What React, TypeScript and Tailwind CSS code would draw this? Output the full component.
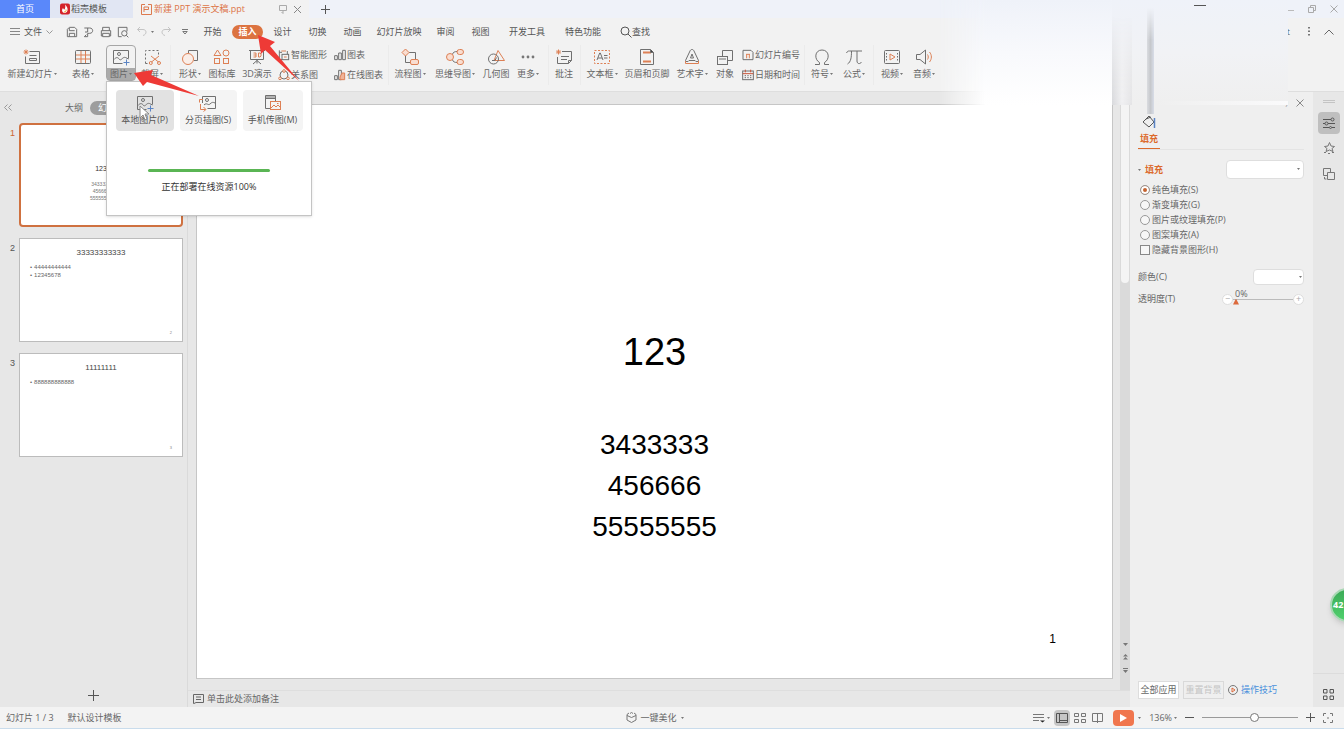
import type { ReactNode } from "react";
import { useState } from "react";

const DARK = "#707070";
const ORANGE = "#dd8055";

function Icon({
  children,
  size = 18,
}: {
  children: ReactNode;
  size?: number;
}): React.ReactElement {
  return (
    <svg
      width={size}
      height={size}
      viewBox="0 0 18 18"
      fill="none"
      stroke={DARK}
      strokeWidth="1"
      className="shrink-0"
      aria-hidden="true"
    >
      {children}
    </svg>
  );
}

function Caret(): React.ReactElement {
  return (
    <svg width="3" height="2" viewBox="0 0 3 2" className="shrink-0" aria-hidden="true">
      <path d="M0 0h3L1.500 2z" fill="#777" />
    </svg>
  );
}

const icons = {
  newSlide: (
    <Icon>
      <path d="M6.500 3.500h10v12h-14v-7M6.500 7.500h7M6.500 10.500h7v2h-7z" />
      <path d="M0.500 4h5M3 1.500v5M1.300 2.300l3.400 3.400M4.700 2.300l-3.400 3.400" stroke={ORANGE} />
    </Icon>
  ),
  table: (
    <Icon>
      <path d="M2 7h14M2 11h14M7 3v12M11.500 3v12" stroke={ORANGE} />
      <rect x="1.500" y="2.500" width="15" height="13" rx="1" />
    </Icon>
  ),
  picture: (
    <Icon>
      <path d="M10.500 15.500h-9v-13h15v8" />
      <circle cx="7" cy="6" r="1.500" />
      <path d="M2 11.500c2-2.500 4-2.500 5.500 0 2 1.500 3-3 6-2l3 1.500" />
      <path d="M14.500 11.500v6M11.500 14.500h6" stroke="#5b84c4" />
    </Icon>
  ),
  screenshot: (
    <Icon>
      <path d="M2.500 15.500v-13h13v4M2.500 15.500h4" strokeDasharray="2 2" />
      <path d="M8 8l7.500 6M16 8l-7.500 6" stroke={ORANGE} />
      <circle cx="7.800" cy="15" r="1.500" stroke={ORANGE} />
      <circle cx="16" cy="15" r="1.500" stroke={ORANGE} />
    </Icon>
  ),
  shapes: (
    <Icon>
      <path d="M7.500 5V2.500h9v10H13" />
      <circle cx="7" cy="11" r="5.500" stroke={ORANGE} fill="#faeee8" />
    </Icon>
  ),
  iconLibrary: (
    <Icon>
      <g stroke={ORANGE}>
        <path d="M4.500 2L8 7.500H1z" />
        <circle cx="13" cy="5" r="3" />
        <rect x="1.500" y="10.500" width="5" height="5" />
        <rect x="10.500" y="10.500" width="5" height="5" />
      </g>
    </Icon>
  ),
  threeD: (
    <Icon>
      <path d="M1 2.500h16M2.500 2.500v9h13v-9M9 11.500v4M5 16l4-3.500 4 3.500" />
      <path d="M5.500 5h2.500v4H5.500M5.500 7H8M10.500 5h1.500l1 1v2l-1 1h-1.500z" stroke={ORANGE} />
    </Icon>
  ),
  flow: (
    <Icon>
      <path d="M8 4.500h6.500V11M4.500 8v6.500H10" />
      <g stroke={ORANGE} fill="#f9ddd0">
        <path d="M4.500 1L8 4.500 4.500 8 1 4.500z" />
        <rect x="9.500" y="11.500" width="8" height="5" rx="1.500" />
      </g>
    </Icon>
  ),
  mindMap: (
    <Icon>
      <path d="M6 7c1-3 3-3.500 5-3.500M6 11c1 3 3 3.500 5 3.500" />
      <g stroke={ORANGE} fill="#f9ddd0">
        <circle cx="4" cy="9" r="3.500" />
        <rect x="11" y="1.500" width="6.500" height="5" rx="2.500" />
        <rect x="11" y="11.500" width="6.500" height="5" rx="2.500" />
      </g>
    </Icon>
  ),
  geometry: (
    <Icon>
      <path d="M11 2.500l6.500 10H7z" stroke={ORANGE} />
      <circle cx="6.500" cy="11" r="5" />
      <path d="M5 12.500h3l1.500-3" />
    </Icon>
  ),
  more: (
    <Icon>
      <g fill="#777" stroke="none">
        <circle cx="4" cy="9" r="1.400" />
        <circle cx="9" cy="9" r="1.400" />
        <circle cx="14" cy="9" r="1.400" />
      </g>
    </Icon>
  ),
  comment: (
    <Icon>
      <path d="M7 3.500h9.500v9l-3 3h-11V9M6 8.500h8M6 11.500h6M13.500 15.500v-3h3" />
      <path d="M1 4h5M3.500 1.500v5M1.800 2.300l3.400 3.400M5.200 2.300L1.800 5.700" stroke={ORANGE} />
    </Icon>
  ),
  textBox: (
    <Icon>
      <rect x="1.500" y="2.500" width="15" height="13" stroke={ORANGE} strokeDasharray="2 1.500" />
      <path d="M4 12l2.700-7h.6L10 12M5 10h4M11 7.500h3.500M11 10h3.500" />
    </Icon>
  ),
  headerFooter: (
    <Icon>
      <path d="M2.500 1.500h10l3 3v12h-13z" />
      <path d="M5 4.500h8M5 13.500h8" stroke={ORANGE} strokeWidth="2" />
      <path d="M12.500 1.500v3h3" fill="#444" />
    </Icon>
  ),
  wordArt: (
    <Icon>
      <path d="M9 1.500c1 0 1.500.5 2 1.500l4.500 9.500c0 1.500-3 1.500-3.500 0H6c-.5 1.500-3.500 1.500-3.500 0L7 3c.5-1 1-1.500 2-1.500z" />
      <path d="M9 6l-1.500 4h3z" />
      <path d="M2.500 13v2.500h13V13" stroke={ORANGE} />
    </Icon>
  ),
  object: (
    <Icon>
      <path d="M6.500 8V2.500h10v10H12" />
      <rect x="1.500" y="8.500" width="10" height="8" />
      <path d="M3 11h7" />
    </Icon>
  ),
  omega: (
    <Icon>
      <path d="M2 16.500h4.500v-2C1 11.500 1.500 2 9 2s8 9.500 2.500 12.500v2H16" />
    </Icon>
  ),
  pi: (
    <Icon>
      <path d="M1.500 5c1-2 1.500-2 3-2H17M6.500 3c0 6-.5 11-4 13M12 3v10c0 3 3 3.500 4.500 1" />
    </Icon>
  ),
  video: (
    <Icon>
      <rect x="1.500" y="2.500" width="15" height="13" rx="1" />
      <path d="M3.500 5v9M14.500 5v9" strokeDasharray="1.500 1.500" />
      <path d="M7 6l5 3-5 3z" stroke={ORANGE} />
    </Icon>
  ),
  audio: (
    <Icon>
      <path d="M1.500 6.500H5L10.500 2v14L5 11.500H1.500z" />
      <path d="M12.500 6.500c1 1.500 1 3.500 0 5M14.500 4c2.500 3 2.500 7 0 10" stroke={ORANGE} />
    </Icon>
  ),
  smartArt: (
    <Icon size={12}>
      <path d="M2 2v14h4M2 5h4M14 8V3" strokeWidth="1.500" />
      <rect x="6" y="8" width="10" height="8" strokeWidth="1.500" />
      <path d="M5 3h7M9 12h4" stroke={ORANGE} strokeWidth="1.500" />
    </Icon>
  ),
  relation: (
    <Icon size={12}>
      <circle cx="9" cy="9" r="6" strokeWidth="1.500" />
      <g stroke={ORANGE} fill="#f2f2f2" strokeWidth="1.500">
        <circle cx="9" cy="3" r="2" />
        <circle cx="3" cy="14" r="2" />
        <circle cx="15" cy="14" r="2" />
      </g>
    </Icon>
  ),
  chart: (
    <Icon size={12}>
      <path d="M1 10h4v6H1zM7 6h4v10H7zM13 2h4v14h-4z" strokeWidth="1.500" />
    </Icon>
  ),
  onlineChart: (
    <Icon size={12}>
      <path d="M1 10h4v6H1zM7 2h4v14H7z" strokeWidth="1.500" />
      <path d="M12 6h4v10H9v-4z" stroke={ORANGE} fill="#f0b498" strokeWidth="1.500" />
    </Icon>
  ),
  slideNumber: (
    <Icon size={12}>
      <path d="M1.500 2h12l3 3v11h-15z" strokeWidth="1.500" />
      <path d="M7 8v6M11 8v6M6 8h6" stroke={ORANGE} strokeWidth="1.500" />
    </Icon>
  ),
  calendar: (
    <Icon size={12}>
      <rect x="1" y="3" width="16" height="13" strokeWidth="1.500" />
      <path d="M1 7h16M5 1v4M13 1v4" stroke="#c8553a" strokeWidth="1.500" />
      <path d="M4 10h2M8 10h2M12 10h2M4 13h2M8 13h2M12 13h2" strokeWidth="1.500" />
    </Icon>
  ),
};

function RibbonButton({
  icon,
  label,
  width,
  caret = false,
}: {
  icon: ReactNode;
  label: string;
  width: string;
  caret?: boolean;
}): React.ReactElement {
  return (
    <button type="button" className={`flex shrink-0 flex-col items-center gap-0.5 pt-[3px] ${width}`}>
      {icon}
      <span className="flex h-3 items-center gap-px whitespace-nowrap leading-3">
        {label}
        {caret && <Caret />}
      </span>
    </button>
  );
}

function RibbonStack({
  items,
  width,
}: {
  items: { icon: ReactNode; label: string }[];
  width: string;
}): React.ReactElement {
  return (
    <div className={`flex shrink-0 flex-col gap-2 pl-0.5 pt-1 ${width}`}>
      {items.map((item) => (
        <button key={item.label} type="button" className="flex h-3 items-center gap-px whitespace-nowrap leading-3">
          {item.icon}
          {item.label}
        </button>
      ))}
    </div>
  );
}

function Divider({ width }: { width: string }): React.ReactElement {
  return (
    <div className={`flex shrink-0 justify-center ${width}`}>
      <div className="h-10 w-px bg-[#ebebeb]" />
    </div>
  );
}

function TabBar(): React.ReactElement {
  return (
    <header className="flex h-[18px] shrink-0 items-stretch bg-[#eff2f9]">
      <button type="button" className="w-[50px] bg-[#5a88fa] text-white">
        首页
      </button>
      <button type="button" className="flex w-[83px] items-center gap-px bg-[#e1e6f3] pl-2.5 text-[#555]">
        <svg width="10" height="12" viewBox="0 0 10 12" aria-hidden="true">
          <rect y="0.500" width="10" height="11" rx="2" fill="#d4232a" />
          <path d="M5 1.500c2 2 3 4 2.500 6C7 9.500 5 10.500 3 9.500 1.500 8 2 6 3 5c.5 1 1 1.500 1.500 1.500C5.500 5 5.500 3 5 1.500z" fill="#fff" />
          <path d="M6 6.500c.5 1.500-.5 2.500-2 2.500" stroke="#f4a62a" fill="none" />
        </svg>
        稻壳模板
      </button>
      <div className="flex w-[176px] items-center bg-[#f2f2f2] pl-2 pr-[7px]">
        <svg width="11" height="11" viewBox="0 0 11 11" fill="none" stroke="#dd7a4e" aria-hidden="true">
          <path d="M4 .500H.500v10h10V.500H7M3 8V3h4.500v2.500H3" />
        </svg>
        <span className="ml-0.5 whitespace-nowrap text-[#dd7548]">新建 PPT 演示文稿.ppt</span>
        <svg className="ml-auto" width="8" height="9" viewBox="0 0 8 9" fill="none" stroke="#aaa" aria-hidden="true">
          <path d="M.500.500h7v5h-7zM4 5.500v3L2.500 7" />
        </svg>
        <button type="button" aria-label="关闭标签" className="ml-1.5">
          <svg width="9" height="9" viewBox="0 0 9 9" stroke="#888" aria-hidden="true">
            <path d="M1 1l7 7M8 1L1 8" />
          </svg>
        </button>
      </div>
      <button type="button" aria-label="新建标签" className="flex w-8 items-center justify-center">
        <svg width="9" height="9" viewBox="0 0 9 9" stroke="#555" aria-hidden="true">
          <path d="M4.500 0v9M0 4.500h9" />
        </svg>
      </button>
      <div className="ml-auto flex items-center gap-3.5 pr-1.5">
        <button type="button" aria-label="最小化">
          <svg width="8" height="8" viewBox="0 0 8 8" stroke="#bbb" aria-hidden="true">
            <path d="M0 5.500h8" />
          </svg>
        </button>
        <button type="button" aria-label="还原">
          <svg width="8" height="8" viewBox="0 0 8 8" fill="none" stroke="#aaa" aria-hidden="true">
            <path d="M.500 2.500h5v5h-5zM2.500 2.500v-2h5v5h-2" />
          </svg>
        </button>
        <button type="button" aria-label="关闭">
          <svg width="8" height="8" viewBox="0 0 8 8" stroke="#aaa" aria-hidden="true">
            <path d="M.500.500l7 7M7.500.500l-7 7" />
          </svg>
        </button>
      </div>
    </header>
  );
}

const quickActions = [
  { name: "保存", path: "M2 16V5l3-3h8l3 3v11zM5 3v4h8M5 16v-5h8v5" },
  { name: "输出", path: "M2 3h8c6 0 6 8 0 8H7M7 3v6H3M7 11v5H2M5 13l-3 3" },
  { name: "打印", path: "M4 7V2h10v5M4 15H2V7h14v8h-2M4 11h10v5H4z" },
  { name: "打印预览", path: "M7 16H2V2h13v6M14 14l3 3M15 11a4 4 0 11-8 0 4 4 0 018 0" },
];

const menuTabs = [
  { label: "开始", width: "w-[35px]" },
  { label: "插入", width: "w-[35px]" },
  { label: "设计", width: "w-[35px]" },
  { label: "切换", width: "w-[35px]" },
  { label: "动画", width: "w-[35px]" },
  { label: "幻灯片放映", width: "w-[58px]" },
  { label: "审阅", width: "w-[35px]" },
  { label: "视图", width: "w-[35px]" },
  { label: "开发工具", width: "w-[58px]" },
  { label: "特色功能", width: "w-[54px]" },
];

function MenuBar(): React.ReactElement {
  const [active, setActive] = useState("插入");

  return (
    <nav className="flex h-[27px] shrink-0 items-center text-[#555]">
      <button type="button" className="flex w-[63px] items-center gap-1 pl-2.5">
        <svg width="10" height="8" viewBox="0 0 10 8" stroke="#888" aria-hidden="true">
          <path d="M0 .500h10M0 3.500h10M0 6.500h10" />
        </svg>
        文件
        <svg width="7" height="4" viewBox="0 0 7 4" fill="none" stroke="#999" aria-hidden="true">
          <path d="M.500.500l3 3 3-3" />
        </svg>
      </button>
      {quickActions.map((action) => (
        <button key={action.name} type="button" aria-label={action.name} className="flex w-[17px] justify-center">
          <svg width="12" height="12" viewBox="0 0 18 18" fill="none" stroke="#707070" strokeWidth="1.500" aria-hidden="true">
            <path d={action.path} />
          </svg>
        </button>
      ))}
      <button type="button" aria-label="撤销" className="flex w-[26px] items-center gap-1 pl-1.5">
        <svg width="10" height="9" viewBox="0 0 10 9" fill="none" stroke="#c4c4c4" aria-hidden="true">
          <path d="M3 0L.500 2.500 3 5M.500 2.500H6c4 0 4 5 0 6" />
        </svg>
        <Caret />
      </button>
      <button type="button" aria-label="恢复" className="flex w-[18px] justify-center">
        <svg width="10" height="9" viewBox="0 0 10 9" fill="none" stroke="#c4c4c4" aria-hidden="true">
          <path d="M7 0l2.500 2.500L7 5M9.500 2.500H4c-4 0-4 5 0 6" />
        </svg>
      </button>
      <button type="button" aria-label="自定义工具栏" className="flex w-5 justify-center">
        <svg width="6" height="6" viewBox="0 0 6 6" fill="none" stroke="#777" aria-hidden="true">
          <path d="M0 .500h6M.800 2.500h4.400L3 5z" />
        </svg>
      </button>
      {menuTabs.map((tab) => (
        <button
          key={tab.label}
          type="button"
          onClick={() => setActive(tab.label)}
          className={`flex justify-center whitespace-nowrap ${tab.width}`}
        >
          <span
            className={
              tab.label === active
                ? "rounded-full bg-[#dc7340] px-1.5 font-bold leading-[14px] text-white"
                : "leading-[14px]"
            }
          >
            {tab.label}
          </span>
        </button>
      ))}
      <button type="button" className="ml-2.5 flex items-center whitespace-nowrap">
        <svg width="12" height="12" viewBox="0 0 12 12" fill="none" stroke="#555" aria-hidden="true">
          <circle cx="5" cy="5" r="4" />
          <path d="M8 8l3.500 3.500" />
        </svg>
        查找
      </button>
      <div className="ml-auto flex items-center gap-3.5 pr-2.5">
        <span className="pr-1">t</span>
        <button type="button" aria-label="更多选项">
          <svg width="2" height="9" viewBox="0 0 2 9" fill="#777" aria-hidden="true">
            <path d="M0 0h2v1.500H0zM0 3.500h2V5H0zM0 7h2v1.500H0z" />
          </svg>
        </button>
        <button type="button" aria-label="收起功能区">
          <svg width="10" height="6" viewBox="0 0 10 6" fill="none" stroke="#666" aria-hidden="true">
            <path d="M.500 5.500L5 1l4.500 4.500" />
          </svg>
        </button>
      </div>
    </nav>
  );
}

function PictureMenu(): React.ReactElement {
  return (
    <div className="absolute left-0 top-full z-20 flex h-[135px] w-[206px] cursor-default flex-col items-center border border-[#c4c4c4] bg-white pt-2 text-[#555] shadow-sm">
      <div className="flex gap-1.5">
        <button type="button" className="flex h-[41px] w-[58px] flex-col items-center gap-0.5 rounded-sm bg-[#e2e2e2] pt-1">
          {icons.picture}
          <span className="whitespace-nowrap leading-3">本地图片(P)</span>
        </button>
        <button type="button" className="flex h-[41px] w-[57px] flex-col items-center gap-0.5 rounded-sm bg-[#f4f4f4] pt-1">
          <Icon>
            <path d="M3.500 9V2.500h13v12h-8" />
            <circle cx="8" cy="6" r="1.500" />
            <path d="M5 11c3-3 4 1 6-1s3-2 5-1" />
            <path d="M4 5.500H.500v3M1.500 10v5.500h5M4.500 13l2.500 2.500-2.500 2" stroke={ORANGE} />
          </Icon>
          <span className="whitespace-nowrap leading-3">分页插图(S)</span>
        </button>
        <button type="button" className="flex h-[41px] w-[60px] flex-col items-center gap-0.5 rounded-sm bg-[#f4f4f4] pt-1">
          <Icon>
            <path d="M6 14.500H1.500v-13h10V7M1.500 4.500h10M1.500 3h10" />
            <rect x="6.500" y="7.500" width="10" height="8" stroke={ORANGE} />
            <path d="M7 14l3-3 2 2 2-2 2 2M13 9.500h1.500" stroke={ORANGE} />
          </Icon>
          <span className="whitespace-nowrap leading-3">手机传图(M)</span>
        </button>
      </div>
      <div
        role="progressbar"
        aria-label="部署进度"
        aria-valuenow={100}
        className="mt-[38px] h-[3px] w-[122px] rounded-full bg-[#5ab554]"
      />
      <p className="mt-[7px] leading-4 text-[#333]">正在部署在线资源100%</p>
    </div>
  );
}

function Ribbon(): React.ReactElement {
  return (
    <section className="flex h-[47px] shrink-0 items-start border-b border-[#dedede] text-[#666]">
      <RibbonButton icon={icons.newSlide} label="新建幻灯片" width="w-16" caret />
      <RibbonButton icon={icons.table} label="表格" width="w-[38px]" caret />
      <div className="relative ml-1 mr-0.5 h-[36px] shrink-0">
        <button
          type="button"
          aria-expanded="true"
          className="flex h-[36px] w-[30px] flex-col items-center gap-0.5 rounded-sm border border-[#a6a6a6] bg-[#f2f2f2] pt-0.5"
        >
          {icons.picture}
          <span className="flex w-full flex-1 items-center justify-center gap-px bg-[#ababab] leading-3">
            图片
            <Caret />
          </span>
        </button>
        <PictureMenu />
      </div>
      <RibbonButton icon={icons.screenshot} label="截屏" width="w-7" caret />
      <Divider width="w-2" />
      <RibbonButton icon={icons.shapes} label="形状" width="w-8" caret />
      <RibbonButton icon={icons.iconLibrary} label="图标库" width="w-8" />
      <RibbonButton icon={icons.threeD} label="3D演示" width="w-[38px]" />
      <RibbonStack
        width="w-14"
        items={[
          { icon: icons.smartArt, label: "智能图形" },
          { icon: icons.relation, label: "关系图" },
        ]}
      />
      <RibbonStack
        width="w-[54px]"
        items={[
          { icon: icons.chart, label: "图表" },
          { icon: icons.onlineChart, label: "在线图表" },
        ]}
      />
      <Divider width="w-1" />
      <RibbonButton icon={icons.flow} label="流程图" width="w-10" caret />
      <RibbonButton icon={icons.mindMap} label="思维导图" width="w-[50px]" caret />
      <RibbonButton icon={icons.geometry} label="几何图" width="w-8" />
      <RibbonButton icon={icons.more} label="更多" width="w-8" caret />
      <Divider width="w-2" />
      <RibbonButton icon={icons.comment} label="批注" width="w-6" />
      <Divider width="w-2" />
      <RibbonButton icon={icons.textBox} label="文本框" width="w-9" caret />
      <RibbonButton icon={icons.headerFooter} label="页眉和页脚" width="w-[54px]" />
      <RibbonButton icon={icons.wordArt} label="艺术字" width="w-9" caret />
      <RibbonButton icon={icons.object} label="对象" width="w-[30px]" />
      <RibbonStack
        width="w-[62px]"
        items={[
          { icon: icons.slideNumber, label: "幻灯片编号" },
          { icon: icons.calendar, label: "日期和时间" },
        ]}
      />
      <Divider width="w-1" />
      <RibbonButton icon={icons.omega} label="符号" width="w-8" caret />
      <RibbonButton icon={icons.pi} label="公式" width="w-8" caret />
      <Divider width="w-1.5" />
      <RibbonButton icon={icons.video} label="视频" width="w-8" caret />
      <RibbonButton icon={icons.audio} label="音频" width="w-8" caret />
    </section>
  );
}

const thumbnails = [
  { title: "33333333333", bullets: ["44444444444", "12345678"] },
  { title: "11111111", bullets: ["888888888888"] },
];

function SlidePanel(): React.ReactElement {
  return (
    <aside className="flex w-[188px] shrink-0 flex-col border-r border-[#dadada] bg-[#e7e7e7]">
      <div className="flex h-[31px] items-center pl-1 text-[#666]">
        <button type="button" aria-label="收起面板" className="w-[61px] text-left">
          <svg width="8" height="7" viewBox="0 0 8 7" fill="none" stroke="#999" aria-hidden="true">
            <path d="M3.500.500l-3 3 3 3M7.500.500l-3 3 3 3" />
          </svg>
        </button>
        <button type="button">大纲</button>
        <button type="button" className="ml-[7px] rounded-full bg-[#9d9d9d] px-2 leading-[14px] text-white">
          幻灯片
        </button>
      </div>
      <ol className="flex flex-col gap-[11px] font-['Liberation_Sans',sans-serif]">
        <li className="flex pr-1">
          <span className="w-[19px] pr-1 pt-1 text-right text-[#cc6633]">1</span>
          <div className="flex h-[104px] flex-1 flex-col items-center rounded-sm border-2 border-[#cf7140] bg-white pt-[38px]">
            <p className="text-[7px] leading-3 text-[#333]">123</p>
            <p className="mt-1.5 whitespace-pre-line text-center text-[5px] leading-[7px] text-[#777]">
              {"3433333\n456666\n55555555"}
            </p>
          </div>
        </li>
        {thumbnails.map((slide, index) => (
          <li key={slide.title} className="flex pr-1">
            <span className="w-[19px] pr-1 pt-1 text-right text-[#555]">{index + 2}</span>
            <div className="flex h-[104px] flex-1 flex-col border border-[#bcbcbc] bg-white px-2.5 pt-2">
              <p className="text-center text-[8px] leading-3 text-[#444]">{slide.title}</p>
              <ul className="mt-1 text-[6px] leading-[8px] text-[#666]">
                {slide.bullets.map((bullet) => (
                  <li key={bullet} className="flex gap-0.5">
                    <span>•</span>
                    {bullet}
                  </li>
                ))}
              </ul>
              <span className="mb-1.5 mt-auto self-end text-[4px] leading-[4px] text-[#888]">{index + 2}</span>
            </div>
          </li>
        ))}
      </ol>
      <button type="button" aria-label="新建幻灯片" className="mb-1.5 mt-auto self-center">
        <svg width="11" height="11" viewBox="0 0 11 11" stroke="#555" aria-hidden="true">
          <path d="M5.500 0v11M0 5.500h11" />
        </svg>
      </button>
    </aside>
  );
}

function SlideEditor(): React.ReactElement {
  return (
    <main className="flex min-w-0 flex-1 flex-col bg-[#e7e7e7]">
      <div className="flex flex-1">
        <div className="flex min-w-0 flex-1 pb-[11px] pl-2 pr-[7px] pt-3">
          <article className="flex flex-1 flex-col border border-[#c6c6c6] bg-white pt-[223px] text-center font-['Liberation_Sans',Arial,sans-serif] text-black">
            <h1 className="text-[38px] leading-[48px]">123</h1>
            <p className="mt-12 whitespace-pre-line text-[28px] leading-[41px]">{"3433333\n456666\n55555555"}</p>
            <span className="mb-[31px] mr-14 mt-auto self-end text-[12px] leading-4">1</span>
          </article>
        </div>
        <div className="flex w-[10px] flex-col items-center bg-[#dadada]">
          <div className="h-[191px] w-2 rounded-b bg-[#f4f4f4]" />
          <div className="mb-4 mt-auto flex flex-col items-center gap-2">
            <svg width="5" height="3" viewBox="0 0 5 3" fill="#777" aria-hidden="true">
              <path d="M0 0h5L2.500 3z" />
            </svg>
            <svg width="5" height="6" viewBox="0 0 5 6" fill="#777" aria-hidden="true">
              <path d="M2.500 0L5 2.500H0zM2.500 3L5 5.500H0z" />
            </svg>
            <svg width="5" height="6" viewBox="0 0 5 6" fill="#777" aria-hidden="true">
              <path d="M0 0h5v1H0zM0 2h5L2.500 5z" />
            </svg>
          </div>
        </div>
      </div>
      <div className="flex h-[17px] items-center gap-[3px] border-t border-[#dedede] pl-[5px] text-[#666]">
        <svg width="11" height="10" viewBox="0 0 11 10" fill="none" stroke="#666" aria-hidden="true">
          <path d="M.500.500h10v8H3l-2 1H.500zM3 3h5M3 5.500h5" />
        </svg>
        单击此处添加备注
      </div>
    </main>
  );
}

const fillOptions = ["纯色填充(S)", "渐变填充(G)", "图片或纹理填充(P)", "图案填充(A)"];

function FillPanel(): React.ReactElement {
  const [fill, setFill] = useState(fillOptions[0]);
  const [opacity, setOpacity] = useState(0);

  return (
    <aside className="flex w-[183px] shrink-0 flex-col bg-[#efefef] pl-2 pr-[9px] text-[#666]">
      <div className="flex h-[22px] items-center justify-end gap-2">
        <span className="text-[#999]">)</span>
        <button type="button" aria-label="关闭面板">
          <svg width="8" height="8" viewBox="0 0 8 8" stroke="#888" aria-hidden="true">
            <path d="M.500.500l7 7M7.500.500l-7 7" />
          </svg>
        </button>
      </div>
      <div className="border-b border-[#e4e4e4]">
        <button type="button" className="flex w-[22px] flex-col items-center border-b border-[#dc6a2c] font-bold text-[#dc6a2c]">
          <svg width="14" height="16" viewBox="0 0 14 16" fill="none" aria-hidden="true">
            <path d="M7 2l5 6-5 5-6-5zM4 5l5-2" stroke="#555" />
            <path d="M12.500 4v10" stroke="#5b84c4" strokeWidth="1.500" />
          </svg>
          <span className="whitespace-nowrap leading-[18px]">填充</span>
        </button>
      </div>
      <div className="mt-2.5 flex items-center justify-between">
        <label htmlFor="fill-preset" className="flex items-center gap-1 font-bold text-[#dc6a2c]">
          <Caret />
          填充
        </label>
        <span className="relative flex">
          <select id="fill-preset" className="h-[19px] w-[78px] appearance-none rounded-sm border border-[#dedede] bg-white">
            <option value=""></option>
          </select>
          <span className="pointer-events-none absolute right-1 top-2">
            <Caret />
          </span>
        </span>
      </div>
      <fieldset className="mt-[3px]">
        {fillOptions.map((option) => (
          <label key={option} className="flex h-[15px] items-center gap-0.5 whitespace-nowrap pl-0.5">
            <input
              type="radio"
              name="fill"
              checked={fill === option}
              onChange={() => setFill(option)}
              className="size-[10px] shrink-0 appearance-none rounded-full border border-[#999] bg-[#f7f7f7] checked:bg-[#c5622f] checked:shadow-[inset_0_0_0_2px_#fff]"
            />
            {option}
          </label>
        ))}
        <label className="flex h-[15px] items-center gap-0.5 whitespace-nowrap pl-0.5">
          <input type="checkbox" className="size-[10px] shrink-0 appearance-none border border-[#888] bg-[#f7f7f7] checked:bg-[#c5622f]" />
          隐藏背景图形(H)
        </label>
      </fieldset>
      <div className="mt-3 flex items-center justify-between">
        <label htmlFor="fill-color">颜色(C)</label>
        <span className="relative flex">
          <select id="fill-color" className="h-4 w-[51px] appearance-none rounded-sm border border-[#dedede] bg-white">
            <option value=""></option>
          </select>
          <span className="pointer-events-none absolute right-0.5 top-[7px]">
            <Caret />
          </span>
        </span>
      </div>
      <div className="mt-2 flex items-center">
        <label htmlFor="opacity">透明度(T)</label>
        <button type="button" aria-label="减少" className="ml-auto flex size-[11px] items-center justify-center rounded-full border border-[#ddd] bg-white text-[#aaa]">
          −
        </button>
        <span className="relative flex h-3 w-[60px] items-center">
          <span className="absolute -top-[5px] left-0.5">{opacity}%</span>
          <input
            id="opacity"
            type="range"
            min={0}
            max={100}
            value={opacity}
            onChange={(e) => setOpacity(Number(e.target.value))}
            className="h-2.5 w-full appearance-none bg-transparent [&::-webkit-slider-runnable-track]:h-px [&::-webkit-slider-runnable-track]:bg-[#bbb] [&::-webkit-slider-thumb]:size-[6px] [&::-webkit-slider-thumb]:appearance-none [&::-webkit-slider-thumb]:bg-[#dc6a3c] [&::-webkit-slider-thumb]:[clip-path:polygon(50%_0,100%_100%,0_100%)]"
          />
        </span>
        <button type="button" aria-label="增加" className="flex size-[11px] items-center justify-center rounded-full border border-[#ddd] bg-white text-[#aaa]">
          +
        </button>
      </div>
      <div className="mb-2 mt-auto flex items-center gap-1">
        <button type="button" className="h-[18px] w-[41px] border border-[#ddd] bg-white">
          全部应用
        </button>
        <button type="button" disabled className="h-[18px] w-[41px] border border-[#d9d9d9] text-[#c4c4c4]">
          重置背景
        </button>
        <a href="#tips" className="flex items-center gap-[3px] whitespace-nowrap text-[#4a90dc]">
          <svg width="10" height="10" viewBox="0 0 10 10" fill="none" aria-hidden="true">
            <circle cx="5" cy="5" r="4.500" stroke="#777" />
            <path d="M4 3l3 2-3 2z" stroke="#dc6a3c" />
          </svg>
          操作技巧
        </a>
      </div>
    </aside>
  );
}

function ToolStrip(): React.ReactElement {
  return (
    <aside className="flex w-[31px] shrink-0 flex-col items-center bg-[#e7e7e7] pt-2">
      <div className="h-[3px] w-3 border-y border-[#c4c4c4]" />
      <button type="button" aria-label="属性" className="mt-[9px] flex size-[22px] items-center justify-center rounded-sm bg-[#bfbfbf]">
        <svg width="12" height="12" viewBox="0 0 12 12" fill="none" stroke="#555" aria-hidden="true">
          <path d="M0 2.500h8M0 6.500h2M5 6.500h7M0 10.500h6M9 10.500h3" />
          <circle cx="9.500" cy="2.500" r="1.500" />
          <circle cx="3.500" cy="6.500" r="1.500" />
          <circle cx="7.500" cy="10.500" r="1" />
        </svg>
      </button>
      <button type="button" aria-label="动画" className="mt-2">
        <svg width="12" height="12" viewBox="0 0 12 12" fill="none" stroke="#777" aria-hidden="true">
          <path d="M6.500.500L8 4l3.500.500L9 6.500l1 3-3.500-1.500L3 9.500l1-3-2.500-2L5 4z" />
          <path d="M1 10.500h2M5 11.500h2M9 10.500h2" />
        </svg>
      </button>
      <button type="button" aria-label="切换" className="mt-3.5">
        <svg width="12" height="12" viewBox="0 0 12 12" fill="none" stroke="#777" aria-hidden="true">
          <path d="M4 7.500H.500v-7h7V4" />
          <path d="M4.500 4.500h7v7h-7zM1.500 9v2h2" />
        </svg>
      </button>
      <button type="button" aria-label="更多工具" className="mt-auto flex h-[34px] w-full items-center justify-center border-t border-[#dcdcdc] pt-2">
        <svg width="11" height="11" viewBox="0 0 11 11" fill="none" stroke="#555" aria-hidden="true">
          <path d="M.500.500h3.500v3.500H.500zM7 .500h3.500v3.500H7zM.500 7h3.500v3.500H.500zM7 7h3.500v3.500H7z" />
        </svg>
      </button>
    </aside>
  );
}

function StatusBar(): React.ReactElement {
  const [zoom, setZoom] = useState(55);

  return (
    <footer className="flex h-[22px] shrink-0 items-center border-b border-[#c9dcec] bg-[#f3f3f3] pl-1.5 pr-[7px] text-[#666]">
      <div className="flex flex-1 items-center gap-3.5">
        <span>幻灯片 1 / 3</span>
        <span>默认设计模板</span>
      </div>
      <button type="button" className="mr-[34px] flex items-center gap-1">
        <svg width="11" height="11" viewBox="0 0 11 11" fill="none" stroke="#777" aria-hidden="true">
          <path d="M3 1L1 2.500V8l4.500 2.500L10 8V2.500L8 1M1 3.500l4.500 2L10 3.500M4 1.500l1.500-1 1.500 1" />
        </svg>
        一键美化
        <Caret />
      </button>
      <div className="flex flex-1 items-center justify-end">
        <button type="button" aria-label="备注" className="flex items-center gap-0.5">
          <svg width="12" height="10" viewBox="0 0 12 10" fill="none" stroke="#777" aria-hidden="true">
            <path d="M0 1.500h11M0 4.500h11M0 7.500h6" />
            <path d="M7 7.500h5l-2.500 2z" fill="#222" stroke="none" />
          </svg>
          <Caret />
        </button>
        <button type="button" aria-label="普通视图" className="ml-1 flex size-4 items-center justify-center rounded-sm bg-[#c6c6c6]">
          <svg width="12" height="10" viewBox="0 0 12 10" fill="none" stroke="#555" aria-hidden="true">
            <path d="M.500.500h11v9H.500zM3.500.500v9M3.500 7.500h8" />
          </svg>
        </button>
        <button type="button" aria-label="幻灯片浏览" className="ml-1">
          <svg width="12" height="10" viewBox="0 0 12 10" fill="none" stroke="#777" aria-hidden="true">
            <path d="M.500.500h4v3h-4zM7.500.500h4v3h-4zM.500 6.500h4v3h-4zM7.500 6.500h4v3h-4z" />
          </svg>
        </button>
        <button type="button" aria-label="阅读视图" className="ml-1.5">
          <svg width="11" height="10" viewBox="0 0 11 10" fill="none" stroke="#777" aria-hidden="true">
            <path d="M.500.500h10v8H.500zM5.500.500v9.500" />
          </svg>
        </button>
        <button type="button" aria-label="放映" className="ml-2.5 flex h-4 w-[21px] items-center justify-center rounded-sm bg-[#f0764e]">
          <svg width="7" height="8" viewBox="0 0 7 8" fill="#fff" aria-hidden="true">
            <path d="M0 0l7 4-7 4z" />
          </svg>
        </button>
        <span className="ml-1">
          <Caret />
        </span>
        <span className="ml-2 mr-0.5">136%</span>
        <Caret />
        <button type="button" aria-label="缩小" className="ml-2">
          <svg width="9" height="9" viewBox="0 0 9 9" stroke="#555" aria-hidden="true">
            <path d="M0 4.500h9" />
          </svg>
        </button>
        <input
          type="range"
          aria-label="缩放"
          value={zoom}
          onChange={(e) => setZoom(Number(e.target.value))}
          className="mx-2 h-3 w-24 appearance-none bg-transparent [&::-webkit-slider-runnable-track]:h-px [&::-webkit-slider-runnable-track]:bg-[#999] [&::-webkit-slider-thumb]:-mt-1 [&::-webkit-slider-thumb]:size-[9px] [&::-webkit-slider-thumb]:appearance-none [&::-webkit-slider-thumb]:rounded-full [&::-webkit-slider-thumb]:border [&::-webkit-slider-thumb]:border-[#777] [&::-webkit-slider-thumb]:bg-white"
        />
        <button type="button" aria-label="放大">
          <svg width="9" height="9" viewBox="0 0 9 9" stroke="#555" aria-hidden="true">
            <path d="M4.500 0v9M0 4.500h9" />
          </svg>
        </button>
        <button type="button" aria-label="适应窗口" className="ml-2 mr-1">
          <svg width="10" height="10" viewBox="0 0 10 10" fill="none" stroke="#777" aria-hidden="true">
            <path d="M.500 3V.500H3M7 .500h2.500V3M9.500 7v2.500H7M3 9.500H.500V7M4 5h2" />
          </svg>
        </button>
      </div>
    </footer>
  );
}

function Haze(): React.ReactElement {
  return (
    <div className="pointer-events-none absolute right-14 top-0 z-10 flex h-[105px] w-[405px]" aria-hidden="true">
      <div className="w-[229px] bg-linear-to-b from-[#eff2f9] via-[#f8f9fc] to-white [mask-image:linear-gradient(to_right,transparent_24%,black_45%)]" />
      <div className="relative flex-1 bg-linear-to-b from-[#eff2f9] via-[#f1f2f5] to-[#efefef]">
        <div className="absolute left-0 top-4 h-[89px] w-5 bg-linear-to-r from-[#d8d9dc] via-[#f0f0f2] to-[#e4e4e6] [mask-image:linear-gradient(to_bottom,transparent,black)]" />
        <div className="absolute left-[35px] top-2 h-[106px] w-[7px] bg-linear-to-r from-[#dadce0] via-[#c6c8cc] to-[#d8dde8] [mask-image:linear-gradient(to_bottom,transparent,black_30%)]" />
        <div className="absolute left-[82px] top-[5px] h-px w-3 bg-[#555]" />
        <div className="absolute bottom-0 left-11 right-0 h-1 bg-linear-to-r from-[#efefef] to-[#fafafb]" />
      </div>
    </div>
  );
}

function Annotations(): React.ReactElement {
  return (
    <svg
      className="pointer-events-none absolute left-0 top-0 z-30"
      width="310"
      height="125"
      viewBox="0 0 310 125"
      aria-hidden="true"
    >
      <g fill="#ee3a36">
        <path d="M258 35l17 7-5 4 29 35-34-31-4 4z" />
        <path d="M134 73l19-3-2 5 48 21-52-14-4 4z" />
      </g>
      <path d="M140 106v12l3-3 2 5 2-1-2-5h4z" fill="#fff" stroke="#888" />
    </svg>
  );
}

export default function App(): React.ReactElement {
  return (
    <div
      lang="zh-CN"
      className="relative flex h-screen flex-col overflow-hidden bg-[#f2f2f2] font-['Open_Sans','Noto_Sans_CJK_SC',sans-serif] text-[9px] leading-3"
    >
      <TabBar />
      <MenuBar />
      <Ribbon />
      <div className="flex min-h-0 flex-1">
        <SlidePanel />
        <SlideEditor />
        <FillPanel />
        <ToolStrip />
      </div>
      <StatusBar />
      <Haze />
      <Annotations />
      <div className="absolute -right-5 bottom-[107px] flex size-[34px] items-center rounded-full border-2 border-[#a9d8b4] bg-linear-to-b from-[#3cab58] to-[#4fd06c] pl-px font-bold text-white shadow-md">
        42
      </div>
    </div>
  );
}
